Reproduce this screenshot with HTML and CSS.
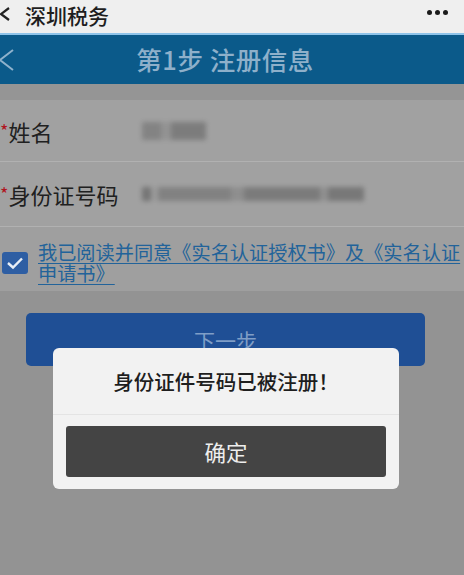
FILE: index.html
```html
<!DOCTYPE html>
<html lang="zh-CN">
<head>
<meta charset="utf-8">
<title>深圳税务</title>
<link rel="stylesheet" href="styles.css">
</head>
<body>
<div class="page">
  <div class="topbar">
    <svg class="top-back" width="12" height="16" viewBox="0 0 12 16"><path d="M10 2 L2 8 L10 14" fill="none" stroke="#222" stroke-width="2.2"/></svg>
    <span class="top-title">深圳税务</span>
    <span class="top-more"><i></i><i></i><i></i></span>
  </div>
  <div class="header">
    <svg class="hdr-back" width="18" height="24" viewBox="0 0 18 24"><path d="M15 2 L2 12 L15 22" fill="none" stroke="#8fb2cc" stroke-width="2"/></svg>
    <span class="hdr-title">第1步 注册信息</span>
  </div>
  <div class="spacer"></div>
  <div class="row row-name">
    <span class="label"><em>*</em>姓名</span>
    <span class="blur blur-name"></span>
  </div>
  <div class="row row-id">
    <span class="label"><em>*</em>身份证号码</span>
    <span class="blur blur-id"></span>
  </div>
  <div class="agree">
    <span class="check"><svg width="18" height="14" viewBox="0 0 18 14"><path d="M2 7 L7 11.5 L16 2.5" fill="none" stroke="#e8eef6" stroke-width="2.4"/></svg></span>
    <span class="agree-text"><span class="ln"><u>我已阅读并同意《实名认证授权书》及《实名认证</u></span><span class="ln"><u>申请书》</u></span></span>
  </div>
  <div class="btn-wrap"><div class="next-btn">下一步</div></div>
</div>
<div class="dialog">
  <div class="dlg-msg">身份证件号码已被注册！</div>
  <div class="dlg-foot"><div class="dlg-ok">确定</div></div>
</div>
</body>
</html>
```
FILE: styles.css
```css
html, body {
  margin: 0;
  padding: 0;
  width: 464px;
  height: 575px;
  overflow: hidden;
  background: #939393;
  font-family: "Noto Sans CJK SC", "Noto Sans", sans-serif;
}
.page {
  width: 464px;
  height: 575px;
  background: #939393;
}
.topbar {
  height: 33px;
  background: #efefef;
  border-bottom: 2px solid #8fc4ea;
  display: flex;
  align-items: flex-start;
}
.top-back {
  margin-left: -1px;
  margin-top: 6px;
  flex: none;
}
.top-title {
  margin-left: 14px;
  margin-top: 4px;
  font-size: 21px;
  line-height: 22px;
  font-weight: 500;
  color: #1e1e1e;
}
.top-more {
  margin-left: auto;
  margin-right: 16px;
  margin-top: 10px;
  display: flex;
  gap: 3px;
}
.top-more i {
  width: 5px;
  height: 5px;
  border-radius: 50%;
  background: #1a1a1a;
}
.header {
  height: 49px;
  background: #0b5a8a;
  display: flex;
  align-items: center;
  position: relative;
}
.hdr-back {
  margin-left: -2px;
}
.hdr-title {
  position: absolute;
  left: 0;
  right: 14px;
  text-align: center;
  font-size: 25.5px;
  font-weight: 500;
  color: #8eb0ca;
  letter-spacing: 0.5px;
  top: 5px;
}
.spacer {
  height: 16px;
  background: #959595;
}
.row {
  background: #a1a1a1;
  display: flex;
  align-items: center;
  border-bottom: 1px solid #b1b1b1;
}
.row-name { height: 61px; }
.row-id { height: 64px; }
.label {
  width: 142px;
  font-size: 22px;
  color: #202020;
  flex: none;
}
.label em {
  font-style: normal;
  color: #b0141e;
  font-size: 18px;
  vertical-align: 3px;
}
.blur {
  display: block;
  filter: blur(2.5px);
  opacity: 0.8;
}
.blur-name {
  width: 64px;
  height: 18px;
  background: linear-gradient(90deg, #7c7c7c 0 30%, #909090 30% 45%, #747474 45% 100%);
}
.blur-id {
  width: 222px;
  height: 14px;
  background: linear-gradient(90deg, #6a6a6a 0 4%, #9a9a9a 4% 7%, #7a7a7a 7% 40%, #8a8a8a 40% 46%, #727272 46% 80%, #8c8c8c 80% 84%, #6e6e6e 84% 100%);
}
.agree {
  display: flex;
  align-items: flex-start;
  background: #9f9f9f;
  height: 64px;
}
.check {
  width: 26px;
  height: 22px;
  margin-left: 2px;
  margin-top: 25px;
  background: #2e5ea3;
  border-radius: 3px;
  display: flex;
  align-items: center;
  justify-content: center;
  flex: none;
}
.agree-text {
  margin-left: 10px;
  margin-top: 15px;
  font-size: 19.2px;
  color: #22639a;
  white-space: nowrap;
  display: flex;
  flex-direction: column;
}
.ln {
  display: block;
  height: 21px;
  line-height: 21px;
}
.agree-text u {
  text-decoration-thickness: 1px;
  text-underline-offset: 3px;
}
.btn-wrap {
  padding: 22px 39px 0 26px;
}
.next-btn {
  height: 53px;
  background: #1f4f95;
  border-radius: 5px;
  color: #7f9ec6;
  font-size: 21px;
  display: flex;
  align-items: center;
  justify-content: center;
}
.dialog {
  position: absolute;
  left: 53px;
  top: 348px;
  width: 346px;
  height: 141px;
  background: #f2f2f2;
  border-radius: 6px;
  display: flex;
  flex-direction: column;
}
.dlg-msg {
  height: 66px;
  display: flex;
  align-items: center;
  justify-content: center;
  font-size: 20.5px;
  font-weight: 500;
  color: #1e1e1e;
  border-bottom: 1px solid #e4e4e4;
}
.dlg-foot {
  padding: 11px 13px 0 13px;
}
.dlg-ok {
  height: 51px;
  background: #444;
  border-radius: 3px;
  color: #eeeeee;
  font-size: 21.5px;
  display: flex;
  align-items: center;
  justify-content: center;
}
```
